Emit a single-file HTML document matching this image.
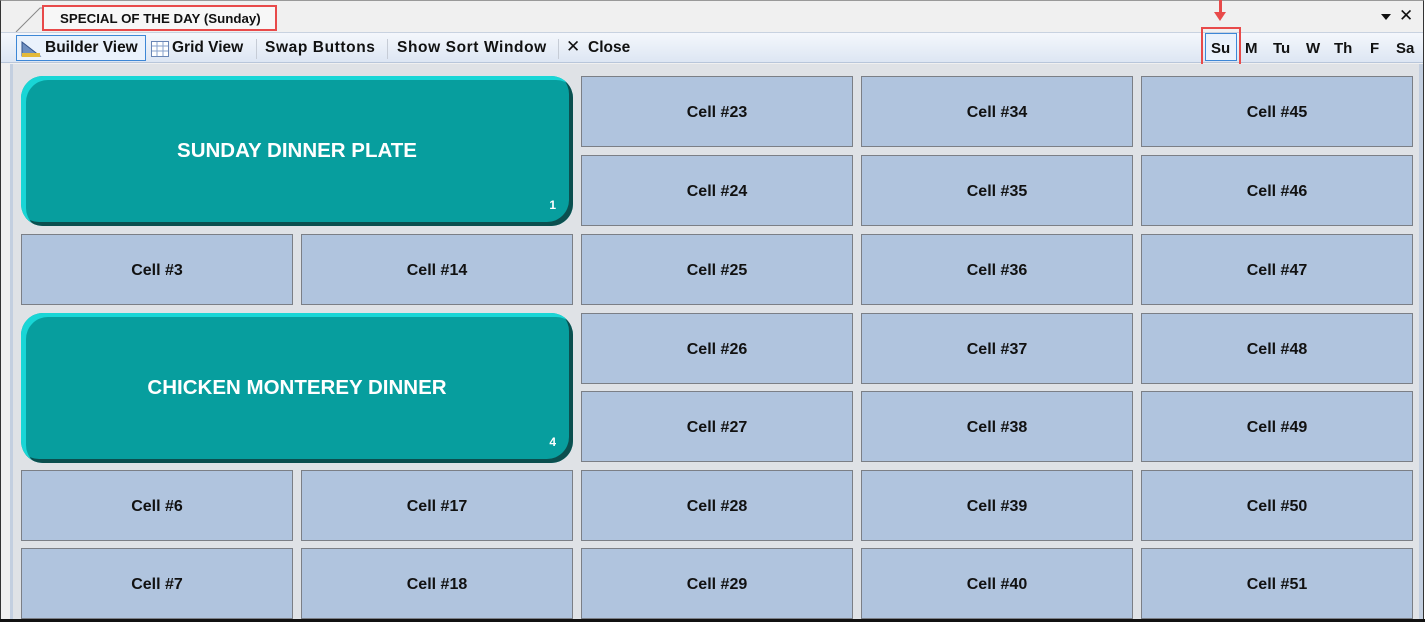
<!DOCTYPE html>
<html><head><style>
*{margin:0;padding:0;box-sizing:border-box}
body{width:1427px;height:622px;background:#fff;position:relative;overflow:hidden;font-family:"Liberation Sans",Arial,sans-serif}
.frame{position:absolute;left:0;top:0;width:1424px;height:621px;border:1px solid #333;border-top:1px solid #999;background:#f0f0f0}
.tab{position:absolute;left:42px;top:5px;width:235px;height:26px;border:2px solid #e84a4a;background:#f7f7f7;font-size:13.3px;font-weight:bold;padding:4px 0 0 16px;color:#111}
.tb{position:absolute;left:1px;top:32px;width:1422px;height:31px;background:linear-gradient(#f4f7fc,#dde6f3);border-top:1px solid #c8d2e0;border-bottom:1px solid #b8c6da}
.tb span{position:absolute;top:6px;font-size:15.5px;font-weight:bold;color:#111}
.sep{position:absolute;top:6px;width:1px;height:20px;background:#c6ccd6}
.content{position:absolute;left:10px;top:64px;width:1413px;height:556px;background:#dfe2e6;border-left:3px solid #c3cfe0;border-right:4px solid #c3cfe0}
.c{position:absolute;width:272px;height:71px;background:#b0c4de;border:1px solid #7b7f86;font-size:16px;font-weight:bold;color:#111;display:flex;align-items:center;justify-content:center;padding-top:3px}
.big{position:absolute;left:21px;width:552px;height:150px;border-radius:22px;background:#079e9e;box-shadow:inset 5px 4px 0 #19d6d6,inset -4px -4px 0 #0b4f4f;color:#fff;font-size:20.5px;font-weight:bold;display:flex;align-items:center;justify-content:center}
.big i{position:absolute;right:17px;bottom:14px;font-style:normal;font-size:12px}
.day{position:absolute;top:40px;font-size:15px;font-weight:bold;color:#111}
</style></head><body>
<div class="frame"></div>
<svg style="position:absolute;left:14px;top:5px" width="30" height="28"><path d="M2 27 L26 3 L30 3" stroke="#888" fill="none"/></svg>
<div class="tab">SPECIAL OF THE DAY (Sunday)</div>
<div style="position:absolute;left:1381px;top:14px;width:0;height:0;border-left:5px solid transparent;border-right:5px solid transparent;border-top:6px solid #111"></div>
<div style="position:absolute;left:1399px;top:6px;font-size:17px;color:#111">✕</div>
<div style="position:absolute;left:1219px;top:0;width:3px;height:14px;background:#e84a4a"></div>
<div style="position:absolute;left:1214px;top:12px;border-left:6px solid transparent;border-right:6px solid transparent;border-top:9px solid #e84a4a"></div>
<div class="tb">
<div style="position:absolute;left:15px;top:2px;width:130px;height:26px;border:1px solid #3d87d6;background:#eaf2fc"></div>
<svg style="position:absolute;left:19px;top:7px" width="22" height="18"><path d="M2 2 L2 16 L20 16 Z" fill="#6f8fbf" stroke="#33548a"/><rect x="2" y="13" width="18" height="4" fill="#e3b93a"/></svg>
<span style="left:44px">Builder View</span>
<svg style="position:absolute;left:150px;top:8px" width="18" height="16"><rect x="0.5" y="0.5" width="17" height="15" fill="#fff" stroke="#6a86b5"/><path d="M1 5H17M1 10H17M6 1V15M12 1V15" stroke="#8aa3cc"/></svg>
<span style="left:171px">Grid View</span>
<div class="sep" style="left:255px"></div>
<span style="left:264px;letter-spacing:0.6px">Swap Buttons</span>
<div class="sep" style="left:386px"></div>
<span style="left:396px;letter-spacing:0.6px">Show Sort Window</span>
<div class="sep" style="left:557px"></div>
<span style="left:565px;font-weight:normal;font-size:17px;top:4px">✕</span>
<span style="left:587px">Close</span>
</div>
<div style="position:absolute;left:1201px;top:27px;width:40px;height:40px;border:2px solid #e84a4a"></div>
<div style="position:absolute;left:1205px;top:33px;width:32px;height:28px;border:1px solid #3d87d6;background:#eaf2fc"></div>
<span class="day" style="left:1211px">Su</span>
<span class="day" style="left:1245px">M</span>
<span class="day" style="left:1273px">Tu</span>
<span class="day" style="left:1306px">W</span>
<span class="day" style="left:1334px">Th</span>
<span class="day" style="left:1370px">F</span>
<span class="day" style="left:1396px">Sa</span>
<div class="content"></div>
<div class="big" style="top:76px">SUNDAY DINNER PLATE<i>1</i></div>
<div class="big" style="top:313px">CHICKEN MONTEREY DINNER<i>4</i></div>
<div class="c" style="left:21px;top:234px">Cell #3</div>
<div class="c" style="left:301px;top:234px">Cell #14</div>
<div class="c" style="left:21px;top:470px">Cell #6</div>
<div class="c" style="left:301px;top:470px">Cell #17</div>
<div class="c" style="left:21px;top:548px">Cell #7</div>
<div class="c" style="left:301px;top:548px">Cell #18</div>
<div class="c" style="left:581px;top:76px">Cell #23</div>
<div class="c" style="left:581px;top:155px">Cell #24</div>
<div class="c" style="left:581px;top:234px">Cell #25</div>
<div class="c" style="left:581px;top:313px">Cell #26</div>
<div class="c" style="left:581px;top:391px">Cell #27</div>
<div class="c" style="left:581px;top:470px">Cell #28</div>
<div class="c" style="left:581px;top:548px">Cell #29</div>
<div class="c" style="left:861px;top:76px">Cell #34</div>
<div class="c" style="left:861px;top:155px">Cell #35</div>
<div class="c" style="left:861px;top:234px">Cell #36</div>
<div class="c" style="left:861px;top:313px">Cell #37</div>
<div class="c" style="left:861px;top:391px">Cell #38</div>
<div class="c" style="left:861px;top:470px">Cell #39</div>
<div class="c" style="left:861px;top:548px">Cell #40</div>
<div class="c" style="left:1141px;top:76px">Cell #45</div>
<div class="c" style="left:1141px;top:155px">Cell #46</div>
<div class="c" style="left:1141px;top:234px">Cell #47</div>
<div class="c" style="left:1141px;top:313px">Cell #48</div>
<div class="c" style="left:1141px;top:391px">Cell #49</div>
<div class="c" style="left:1141px;top:470px">Cell #50</div>
<div class="c" style="left:1141px;top:548px">Cell #51</div>
<div style="position:absolute;left:0;top:619px;width:1425px;height:3px;background:#111"></div>
</body></html>
